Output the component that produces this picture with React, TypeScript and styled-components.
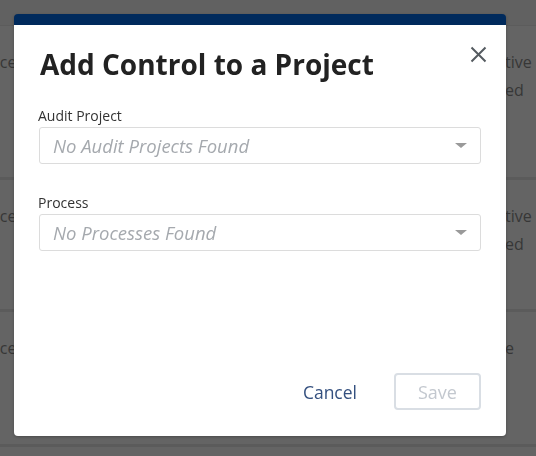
import React from "react";
import styled, { createGlobalStyle } from "styled-components";

const Global = createGlobalStyle`
  html, body { margin: 0; padding: 0; }
  body { font-family: "Open Sans", "Liberation Sans", sans-serif; background: #646464; }
`;

const Page = styled.div`
  width: 536px;
  height: 456px;
  overflow: hidden;
  background: #646464;
  display: flex;
  flex-direction: column;
`;

const TopBand = styled.div`
  height: 25px;
  background: #616161;
  border-bottom: 1px solid #5c5c5c;
`;

const BgRow = styled.div<{ $h: number }>`
  height: ${(p) => p.$h}px;
  border-bottom: 3px solid #5b5b5b;
  display: flex;
  justify-content: space-between;
  padding-top: 22px;
  box-sizing: border-box;
  font-size: 16px;
  color: #373737;
  line-height: 28px;
`;

const BgLeft = styled.div`
  margin-left: -10px;
`;

const BgRight = styled.div`
  text-align: left;
  width: 31px;
`;

const Overlay = styled.div`
  position: fixed;
  inset: 0;
`;

const Modal = styled.div`
  position: absolute;
  left: 14px;
  top: 14px;
  width: 492px;
  height: 422px;
  background: #fff;
  border-radius: 4px;
  border-top: 11px solid #002a5c;
  box-sizing: border-box;
  box-shadow: 0 1px 3px rgba(0, 0, 0, 0.25);
  display: flex;
  flex-direction: column;
  padding: 0 25px 26px 25px;
`;

const Header = styled.div`
  display: flex;
  justify-content: space-between;
  align-items: flex-start;
  padding-top: 20px;
`;

const Title = styled.h2`
  margin: 0 0 0 1px;
  font-size: 28px;
  font-weight: 700;
  color: #222;
  line-height: 38px;
`;

const Close = styled.button`
  border: 0;
  background: none;
  padding: 0;
  width: 17px;
  height: 17px;
  margin-top: 1px;
  margin-right: -6px;
  cursor: pointer;
  display: flex;
`;

const Field = styled.div<{ $mt: number }>`
  margin-top: ${(p) => p.$mt}px;
  display: flex;
  flex-direction: column;
`;

const Label = styled.label`
  font-size: 14px;
  color: #333;
  line-height: 19px;
  margin-left: -1px;
  margin-bottom: 2px;
`;

const Select = styled.div`
  height: 37px;
  border: 1px solid #dcdcdc;
  border-radius: 3px;
  box-sizing: border-box;
  display: flex;
  align-items: center;
  justify-content: space-between;
  padding: 0 13px 0 13px;
`;

const Placeholder = styled.span`
  font-style: italic;
  font-size: 18.5px;
  color: #a5a9ae;
  line-height: 24px;
`;

const Caret = styled.span`
  width: 0;
  height: 0;
  border-left: 6px solid transparent;
  border-right: 6px solid transparent;
  border-top: 5px solid #9a9a9a;
`;

const Spacer = styled.div`
  flex: 1;
`;

const Footer = styled.div`
  display: flex;
  justify-content: flex-end;
  align-items: center;
  gap: 37px;
`;

const LinkButton = styled.button`
  border: 0;
  background: none;
  font-family: inherit;
  font-size: 17.5px;
  color: #34507f;
  padding: 0;
`;

const SaveButton = styled.button`
  width: 87px;
  height: 37px;
  border: 2px solid #d9dee4;
  border-radius: 4px;
  background: #fff;
  font-family: inherit;
  font-size: 18px;
  color: #c3c8cf;
  padding: 0;
`;

export default function App() {
  return (
    <>
      <Global />
      <Page>
        <TopBand />
        <BgRow $h={154}>
          <BgLeft>nce</BgLeft>
          <BgRight>
            tive
            <br />
            ed
          </BgRight>
        </BgRow>
        <BgRow $h={132}>
          <BgLeft>nce</BgLeft>
          <BgRight>
            tive
            <br />
            ed
          </BgRight>
        </BgRow>
        <BgRow $h={135}>
          <BgLeft>nce</BgLeft>
          <BgRight>e</BgRight>
        </BgRow>
      </Page>
      <Overlay>
        <Modal role="dialog">
          <Header>
            <Title>Add Control to a Project</Title>
            <Close aria-label="Close">
              <svg width="17" height="17" viewBox="0 0 17 17">
                <path d="M1.5 1.5L15.5 15.5M15.5 1.5L1.5 15.5" stroke="#555b60" strokeWidth="2" />
              </svg>
            </Close>
          </Header>
          <Field $mt={23}>
            <Label>Audit Project</Label>
            <Select>
              <Placeholder>No Audit Projects Found</Placeholder>
              <Caret />
            </Select>
          </Field>
          <Field $mt={29}>
            <Label>Process</Label>
            <Select>
              <Placeholder>No Processes Found</Placeholder>
              <Caret />
            </Select>
          </Field>
          <Spacer />
          <Footer>
            <LinkButton>Cancel</LinkButton>
            <SaveButton disabled>Save</SaveButton>
          </Footer>
        </Modal>
      </Overlay>
    </>
  );
}
